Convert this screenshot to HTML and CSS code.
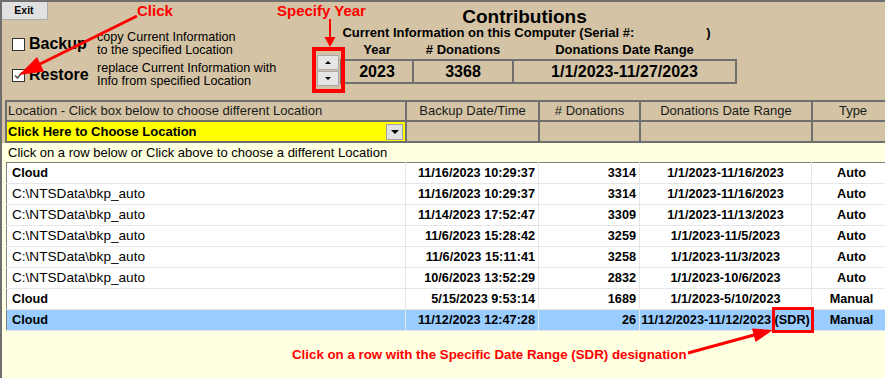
FILE: index.html
```html
<!DOCTYPE html>
<html lang="en">
<head>
  <meta charset="UTF-8" />
  <title>Contributions - Backup / Restore</title>
  <link rel="stylesheet" href="styles.css">
</head>
<body>
  <div class="app">
    <div class="top">
      <div class="options">
        <button class="exit">Exit</button>
        <div class="opt">
          <label class="opt-main"><span class="box"></span>Backup</label>
          <div class="opt-desc">copy Current Information<br>to the specified Location</div>
        </div>
        <div class="opt">
          <label class="opt-main"><span class="box"><svg width="11" height="11" viewBox="0 0 11 11"><polyline points="2,5.5 4.5,8 9,2.5" fill="none" stroke="#555" stroke-width="1.6"/></svg></span>Restore</label>
          <div class="opt-desc">replace Current Information with<br>Info from specified Location</div>
        </div>
      </div>

      <div class="summary">
        <h1>Contributions</h1>
        <div class="serial">Current Information on this Computer (Serial #:<span class="serial-no"></span>)</div>
        <div class="summary-row">
          <div class="spin">
            <button class="spin-btn"><span class="tri-up"></span></button>
            <button class="spin-btn"><span class="tri-down"></span></button>
          </div>
          <div class="stats">
            <div class="stat-heads">
              <div>Year</div>
              <div># Donations</div>
              <div>Donations Date Range</div>
            </div>
            <div class="stat-vals">
              <div>2023</div>
              <div>3368</div>
              <div>1/1/2023-11/27/2023</div>
            </div>
          </div>
        </div>
      </div>
    </div>

    <div class="loc-grid">
      <div class="gh gh-left">Location - Click box below to choose different Location</div>
      <div class="gh">Backup Date/Time</div>
      <div class="gh"># Donations</div>
      <div class="gh">Donations Date Range</div>
      <div class="gh">Type</div>
      <div class="combo">
        <span>Click Here to Choose Location</span>
        <span class="combo-btn"><span class="tri-down big"></span></span>
      </div>
      <div class="gc"></div>
      <div class="gc"></div>
      <div class="gc"></div>
      <div class="gc"></div>
    </div>

    <div class="pane">
      <div class="hint">Click on a row below or Click above to choose a different Location</div>
      <table class="list">
        <colgroup>
          <col style="width:399px">
          <col style="width:133px">
          <col style="width:101px">
          <col style="width:172px">
          <col style="width:80px">
        </colgroup>
        <tr><td class="b">Cloud</td><td class="r">11/16/2023 10:29:37</td><td class="r">3314</td><td class="c">1/1/2023-11/16/2023</td><td class="c">Auto</td></tr>
        <tr><td>C:\NTSData\bkp_auto</td><td class="r">11/16/2023 10:29:37</td><td class="r">3314</td><td class="c">1/1/2023-11/16/2023</td><td class="c">Auto</td></tr>
        <tr><td>C:\NTSData\bkp_auto</td><td class="r">11/14/2023 17:52:47</td><td class="r">3309</td><td class="c">1/1/2023-11/13/2023</td><td class="c">Auto</td></tr>
        <tr><td>C:\NTSData\bkp_auto</td><td class="r">11/6/2023 15:28:42</td><td class="r">3259</td><td class="c">1/1/2023-11/5/2023</td><td class="c">Auto</td></tr>
        <tr><td>C:\NTSData\bkp_auto</td><td class="r">11/6/2023 15:11:41</td><td class="r">3258</td><td class="c">1/1/2023-11/3/2023</td><td class="c">Auto</td></tr>
        <tr><td>C:\NTSData\bkp_auto</td><td class="r">10/6/2023 13:52:29</td><td class="r">2832</td><td class="c">1/1/2023-10/6/2023</td><td class="c">Auto</td></tr>
        <tr><td class="b">Cloud</td><td class="r">5/15/2023 9:53:14</td><td class="r">1689</td><td class="c">1/1/2023-5/10/2023</td><td class="c">Manual</td></tr>
        <tr class="sel"><td class="b">Cloud</td><td class="r">11/12/2023 12:47:28</td><td class="r">26</td><td class="c">11/12/2023-11/12/2023 <span class="sdr">(SDR)</span></td><td class="c">Manual</td></tr>
      </table>
      <p class="note">Click on a row with the Specific Date Range (SDR) designation</p>
    </div>

    <span class="callout callout-click">Click</span>
    <span class="callout callout-year">Specify Year</span>
    <svg class="arrows" width="885" height="378" viewBox="0 0 885 378">
      <line x1="137" y1="16" x2="40" y2="64" stroke="#f00" stroke-width="3"/>
      <polygon points="19,75 44,71.5 37,57" fill="#f00"/>
      <line x1="330" y1="19" x2="330" y2="38" stroke="#f00" stroke-width="2"/>
      <polygon points="324.5,37 335.5,37 330,47" fill="#f00"/>
      <line x1="688" y1="353" x2="754" y2="335" stroke="#f00" stroke-width="3"/>
      <polygon points="773,330 755.5,342 752,328.4" fill="#f00"/>
    </svg>
  </div>
</body>
</html>
```

FILE: styles.css
```css
body {
  margin: 0;
  font-family: "Liberation Sans", Arial, sans-serif;
  color: #000;
}

.app {
  position: relative;
  width: 883px;
  height: 376px;
  background: #d4c4a5;
  border-top: 2px solid #6f6f6f;
  border-left: 2px solid #6f6f6f;
  display: flex;
  flex-direction: column;
  overflow: hidden;
}

/* top area */
.top {
  display: flex;
  height: 98px;
}

.options {
  width: 310px;
}

.exit {
  display: block;
  width: 48px;
  height: 20px;
  margin: -2px 0 0 -2px;
  padding: 0;
  background: #e1e1e1;
  border: 1px solid #adadad;
  font: bold 10.5px "Liberation Sans", Arial, sans-serif;
  color: #000;
}

.opt {
  display: flex;
  align-items: center;
  height: 26px;
  padding-left: 10px;
  margin-top: 5px;
}

.exit + .opt {
  margin-top: 11px;
}

.opt-main {
  display: flex;
  align-items: center;
  gap: 4px;
  width: 85px;
  font-weight: bold;
  font-size: 16px;
}

.box {
  width: 11px;
  height: 11px;
  border: 1px solid #333;
  background: #fff;
  display: flex;
}

.opt-desc {
  font-size: 12.6px;
  line-height: 13px;
}

.summary {
  width: 425px;
  text-align: center;
}

.summary h1 {
  margin: 5px 0 0;
  font-size: 19px;
  line-height: 19px;
}

.serial {
  font-weight: bold;
  font-size: 13px;
  line-height: 14px;
  padding-left: 4px;
}

.serial-no {
  display: inline-block;
  width: 72px;
}

.summary-row {
  display: flex;
  margin-top: 1px;
}

.spin {
  position: relative;
  width: 28px;
  padding-top: 14px;
  box-sizing: border-box;
  padding-left: 5px;
  display: flex;
  flex-direction: column;
  gap: 1px;
}

.spin::after {
  content: "";
  position: absolute;
  left: 0;
  top: 6px;
  width: 33px;
  height: 46px;
  border: 4px solid #f00;
  box-sizing: border-box;
}

.spin-btn {
  width: 22px;
  height: 15px;
  padding: 0;
  background: #e6e6e6;
  border: 1px solid #a8a8a8;
  display: flex;
  align-items: center;
  justify-content: center;
}

.tri-up {
  border-left: 3px solid transparent;
  border-right: 3px solid transparent;
  border-bottom: 3px solid #000;
}

.tri-down {
  border-left: 3px solid transparent;
  border-right: 3px solid transparent;
  border-top: 3px solid #000;
}

.tri-down.big {
  border-left-width: 4px;
  border-right-width: 4px;
  border-top-width: 4px;
}

.stats {
  width: 397px;
}

.stat-heads,
.stat-vals {
  display: grid;
  grid-template-columns: 70px 98px 221px;
  gap: 2px;
}

.stat-heads {
  padding: 0 2px;
  font-weight: bold;
  font-size: 13px;
  line-height: 15px;
  margin-top: 1px;
}

.stat-vals {
  margin-top: 2px;
  background: #6f6f6f;
  border: 2px solid #6f6f6f;
  font-weight: bold;
  font-size: 16px;
  line-height: 21px;
}

.stat-vals div {
  background: #d4c4a5;
}

/* location grid */
.loc-grid {
  display: grid;
  grid-template-columns: 398px 131px 99px 170px 80px;
  grid-template-rows: 18px 19px;
  gap: 2px;
  margin-left: 3px;
  width: 890px;
  background: #6f6f6f;
  border: 2px solid #6f6f6f;
  font-size: 13px;
}

.gh {
  background: #d4c4a5;
  text-align: center;
  line-height: 18px;
  color: #1a1a1a;
}

.gh-left {
  text-align: left;
  padding-left: 1px;
}

.gc {
  background: #d4c4a5;
}

.combo {
  background: #ffff00;
  display: flex;
  align-items: center;
  justify-content: space-between;
  padding-left: 1px;
  font-weight: bold;
}

.combo-btn {
  width: 15px;
  height: 14px;
  margin-right: 2px;
  background: #e1e1e1;
  border: 1px solid #a0a0a0;
  display: flex;
  align-items: center;
  justify-content: center;
}

/* list pane */
.pane {
  flex: 1;
  background: #ffffe1;
}

.hint {
  height: 19px;
  padding: 1px 0 0 6px;
  box-sizing: border-box;
  font-size: 13px;
  line-height: 17px;
}

.list {
  margin-left: 4px;
  width: 885px;
  table-layout: fixed;
  border-collapse: collapse;
  background: #fff;
  border-top: 1px solid #7f7f7f;
  border-left: 1px solid #7f7f7f;
  border-bottom: 1px solid #7f7f7f;
  font-size: 12.7px;
  font-weight: bold;
}

.list td {
  height: 20px;
  padding: 0 4px;
  line-height: 20px;
  border-right: 1px solid #e6e6e6;
  border-bottom: 1px solid #e6e6e6;
  white-space: nowrap;
  overflow: visible;
}

.list td:first-child {
  padding-left: 5px;
  font-weight: normal;
  font-size: 13.6px;
}

.list td.b {
  font-weight: bold;
  font-size: 12.7px;
}

.list td.r {
  text-align: right;
  padding-right: 3px;
}

.list td.c {
  text-align: center;
  padding: 0;
}

.list tr.sel td {
  background: #99ccff;
}

.sdr {
  position: relative;
}

.sdr::after {
  content: "";
  position: absolute;
  left: -3px;
  right: -4px;
  top: -6px;
  bottom: -6px;
  border: 3px solid #f00;
}

.note {
  margin: 16px 0 0 290px;
  color: #f00;
  font-weight: bold;
  font-size: 13.3px;
  line-height: 16px;
}

/* annotations */
.callout {
  position: absolute;
  color: #f00;
  font-weight: bold;
  font-size: 15px;
  line-height: 17px;
}

.callout-click {
  left: 135px;
  top: 0;
}

.callout-year {
  left: 275px;
  top: 0;
}

.arrows {
  position: absolute;
  left: -2px;
  top: -2px;
  pointer-events: none;
}
```
